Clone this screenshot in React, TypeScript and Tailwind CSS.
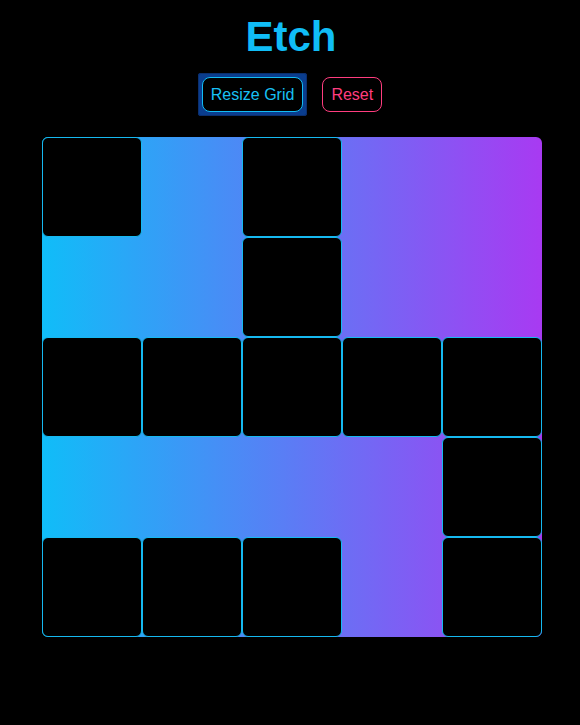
import React from "react";

const pattern = [
  [0, 1, 0, 1, 1],
  [1, 1, 0, 1, 1],
  [0, 0, 0, 0, 0],
  [1, 1, 1, 1, 0],
  [0, 0, 0, 1, 0],
];

export default function App() {
  return (
    <div
      className="min-h-[725px] w-full bg-black flex flex-col items-center"
      style={{ fontFamily: '"Liberation Sans", Arial, sans-serif' }}
    >
      <h1 className="mt-[16px] ml-[2px] text-[42px] leading-[42px] font-bold text-[#10bdf6]">Etch</h1>
      <div className="mt-[15px] flex items-center gap-[15px]">
        <div className="rounded-[3px] bg-[#0a3d8e] p-[4px] shadow-[inset_0_0_0_1px_#0b2f6e]">
          <button className="block rounded-lg border border-[#12bdf5] bg-black px-[8px] py-[8px] text-[16px] leading-[17px] text-[#18c0f5]">
            Resize Grid
          </button>
        </div>
        <button className="block rounded-lg border border-[#ff3d7f] bg-black px-[8px] py-[8px] text-[16px] leading-[17px] text-[#ff3d7f]">
          Reset
        </button>
      </div>
      <div className="mt-[21px] ml-[4px] grid w-[500px] grid-cols-5 rounded-md bg-[linear-gradient(to_right,#10bdf8,#a83af2)]">
        {pattern.flatMap((row, r) =>
          row.map((painted, c) =>
            painted ? (
              <div key={`${r}-${c}`} className="h-[100px] w-[100px]" />
            ) : (
              <div
                key={`${r}-${c}`}
                className="h-[100px] w-[100px] rounded-md border border-[#16b9f0] bg-black"
              />
            )
          )
        )}
      </div>
    </div>
  );
}
